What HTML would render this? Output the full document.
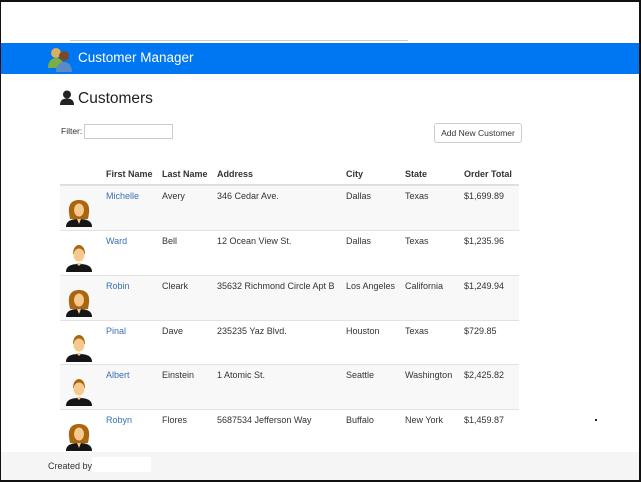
<!DOCTYPE html>
<html><head><meta charset="utf-8"><style>
*{margin:0;padding:0;box-sizing:border-box}
body{width:641px;height:482px;position:relative;overflow:hidden;background:#fff;font-family:"Liberation Sans",sans-serif;color:#333;font-size:9px}
.a{position:absolute;white-space:nowrap}
.row{position:absolute;left:60px;width:459px;height:45px;border-top:1px solid #e2e2e2}
.row.o{background:#f8f8f8}
.c{position:absolute;top:5px}
.fn{color:#3a70b5}
.h{font-weight:bold;top:169px;font-size:9px}
</style></head><body>
<div class="a" style="left:0;top:0;width:641px;height:2px;background:#111"></div>
<div class="a" style="left:0;top:0;width:1px;height:482px;background:#111"></div>
<div class="a" style="right:0;top:0;width:2px;height:482px;background:#111"></div>
<div class="a" style="left:0;bottom:0;width:641px;height:2px;background:#111"></div>
<div class="a" style="left:70px;top:40px;width:338px;height:1px;background:#ccc"></div>
<div class="a" style="left:1px;top:43px;width:638px;height:31px;background:#0077f2"></div>
<svg class="a" style="left:47px;top:46px" width="28" height="26" viewBox="0 0 28 26">
<circle cx="9" cy="7" r="5" fill="#d8b060"/><path d="M1 22c0-7 4-10 8-10s8 3 8 10z" fill="#79b040"/>
<circle cx="17" cy="10" r="5" fill="#7a4a28"/><path d="M9 26c0-7 4-10 8-10s8 3 8 10z" fill="#5a8ac8"/></svg>
<div class="a" style="left:78px;top:50px;color:#fff;font-size:13.5px">Customer Manager</div>
<svg class="a" style="left:60px;top:90px" width="14" height="15" viewBox="0 0 14 15"><circle cx="7" cy="4.5" r="4" fill="#222"/><path d="M0 15c0-5 3-6.5 7-6.5s7 1.5 7 6.5z" fill="#222"/></svg>
<div class="a" style="left:78px;top:90px;font-size:15.5px;color:#222">Customers</div>
<div class="a" style="left:61px;top:126px;font-size:8.5px">Filter:</div>
<div class="a" style="left:84px;top:124px;width:89px;height:15px;border:1px solid #ccc"></div>
<div class="a" style="left:434px;top:123px;width:88px;height:20px;border:1px solid #ccc;border-radius:3px;font-size:8.5px;text-align:center;line-height:18px">Add New Customer</div>
<div class="a h" style="left:106px">First Name</div>
<div class="a h" style="left:162px">Last Name</div>
<div class="a h" style="left:217px">Address</div>
<div class="a h" style="left:346px">City</div>
<div class="a h" style="left:405px">State</div>
<div class="a h" style="left:464px">Order Total</div>
<div class="a" style="left:60px;top:184px;width:459px;height:1px;background:#ddd"></div>

<svg width="0" height="0" style="position:absolute"><defs>
<g id="f"><path d="M5 16c-1-9 3-13 10-13s11 4 10 13l-1 6h-18z" fill="#a8660e"/><ellipse cx="15" cy="13" rx="5" ry="6.5" fill="#f7c98e"/><path d="M2 30c0-6 5-8 13-8s13 2 13 8z" fill="#151515"/><path d="M13 22l2 5 2-5z" fill="#f7c98e"/></g>
<g id="m"><path d="M9 12c0-6 3-9 6-9s6 3 6 9z" fill="#a8660e"/><ellipse cx="15" cy="13" rx="5.5" ry="6.5" fill="#f7c98e"/><path d="M2 30c0-6 5-8 13-8s13 2 13 8z" fill="#151515"/><path d="M12 21h6l-3 3z" fill="#f7c98e"/></g>
</defs></svg>

<div class="row o" style="top:185px"><svg class="a" style="left:4px;top:11px" width="30" height="30"><use href="#f"/></svg><span class="c fn" style="left:46px">Michelle</span><span class="c" style="left:102px">Avery</span><span class="c" style="left:157px">346 Cedar Ave.</span><span class="c" style="left:286px">Dallas</span><span class="c" style="left:345px">Texas</span><span class="c" style="left:404px">$1,699.89</span></div>
<div class="row" style="top:230px"><svg class="a" style="left:4px;top:11px" width="30" height="30"><use href="#m"/></svg><span class="c fn" style="left:46px">Ward</span><span class="c" style="left:102px">Bell</span><span class="c" style="left:157px">12 Ocean View St.</span><span class="c" style="left:286px">Dallas</span><span class="c" style="left:345px">Texas</span><span class="c" style="left:404px">$1,235.96</span></div>
<div class="row o" style="top:275px"><svg class="a" style="left:4px;top:11px" width="30" height="30"><use href="#f"/></svg><span class="c fn" style="left:46px">Robin</span><span class="c" style="left:102px">Cleark</span><span class="c" style="left:157px">35632 Richmond Circle Apt B</span><span class="c" style="left:286px">Los Angeles</span><span class="c" style="left:345px">California</span><span class="c" style="left:404px">$1,249.94</span></div>
<div class="row" style="top:320px"><svg class="a" style="left:4px;top:11px" width="30" height="30"><use href="#m"/></svg><span class="c fn" style="left:46px">Pinal</span><span class="c" style="left:102px">Dave</span><span class="c" style="left:157px">235235 Yaz Blvd.</span><span class="c" style="left:286px">Houston</span><span class="c" style="left:345px">Texas</span><span class="c" style="left:404px">$729.85</span></div>
<div class="row o" style="top:364px"><svg class="a" style="left:4px;top:11px" width="30" height="30"><use href="#m"/></svg><span class="c fn" style="left:46px">Albert</span><span class="c" style="left:102px">Einstein</span><span class="c" style="left:157px">1 Atomic St.</span><span class="c" style="left:286px">Seattle</span><span class="c" style="left:345px">Washington</span><span class="c" style="left:404px">$2,425.82</span></div>
<div class="row" style="top:409px"><svg class="a" style="left:4px;top:11px" width="30" height="30"><use href="#f"/></svg><span class="c fn" style="left:46px">Robyn</span><span class="c" style="left:102px">Flores</span><span class="c" style="left:157px">5687534 Jefferson Way</span><span class="c" style="left:286px">Buffalo</span><span class="c" style="left:345px">New York</span><span class="c" style="left:404px">$1,459.87</span></div>
<div class="a" style="left:595px;top:419px;width:2px;height:2px;background:#222"></div>

<div class="a" style="left:1px;top:452px;width:638px;height:28px;background:#f5f5f5"></div>
<div class="a" style="left:48px;top:461px;font-size:9px">Created by</div>
<div class="a" style="left:92px;top:457px;width:59px;height:15px;background:#fff"></div>
</body></html>
